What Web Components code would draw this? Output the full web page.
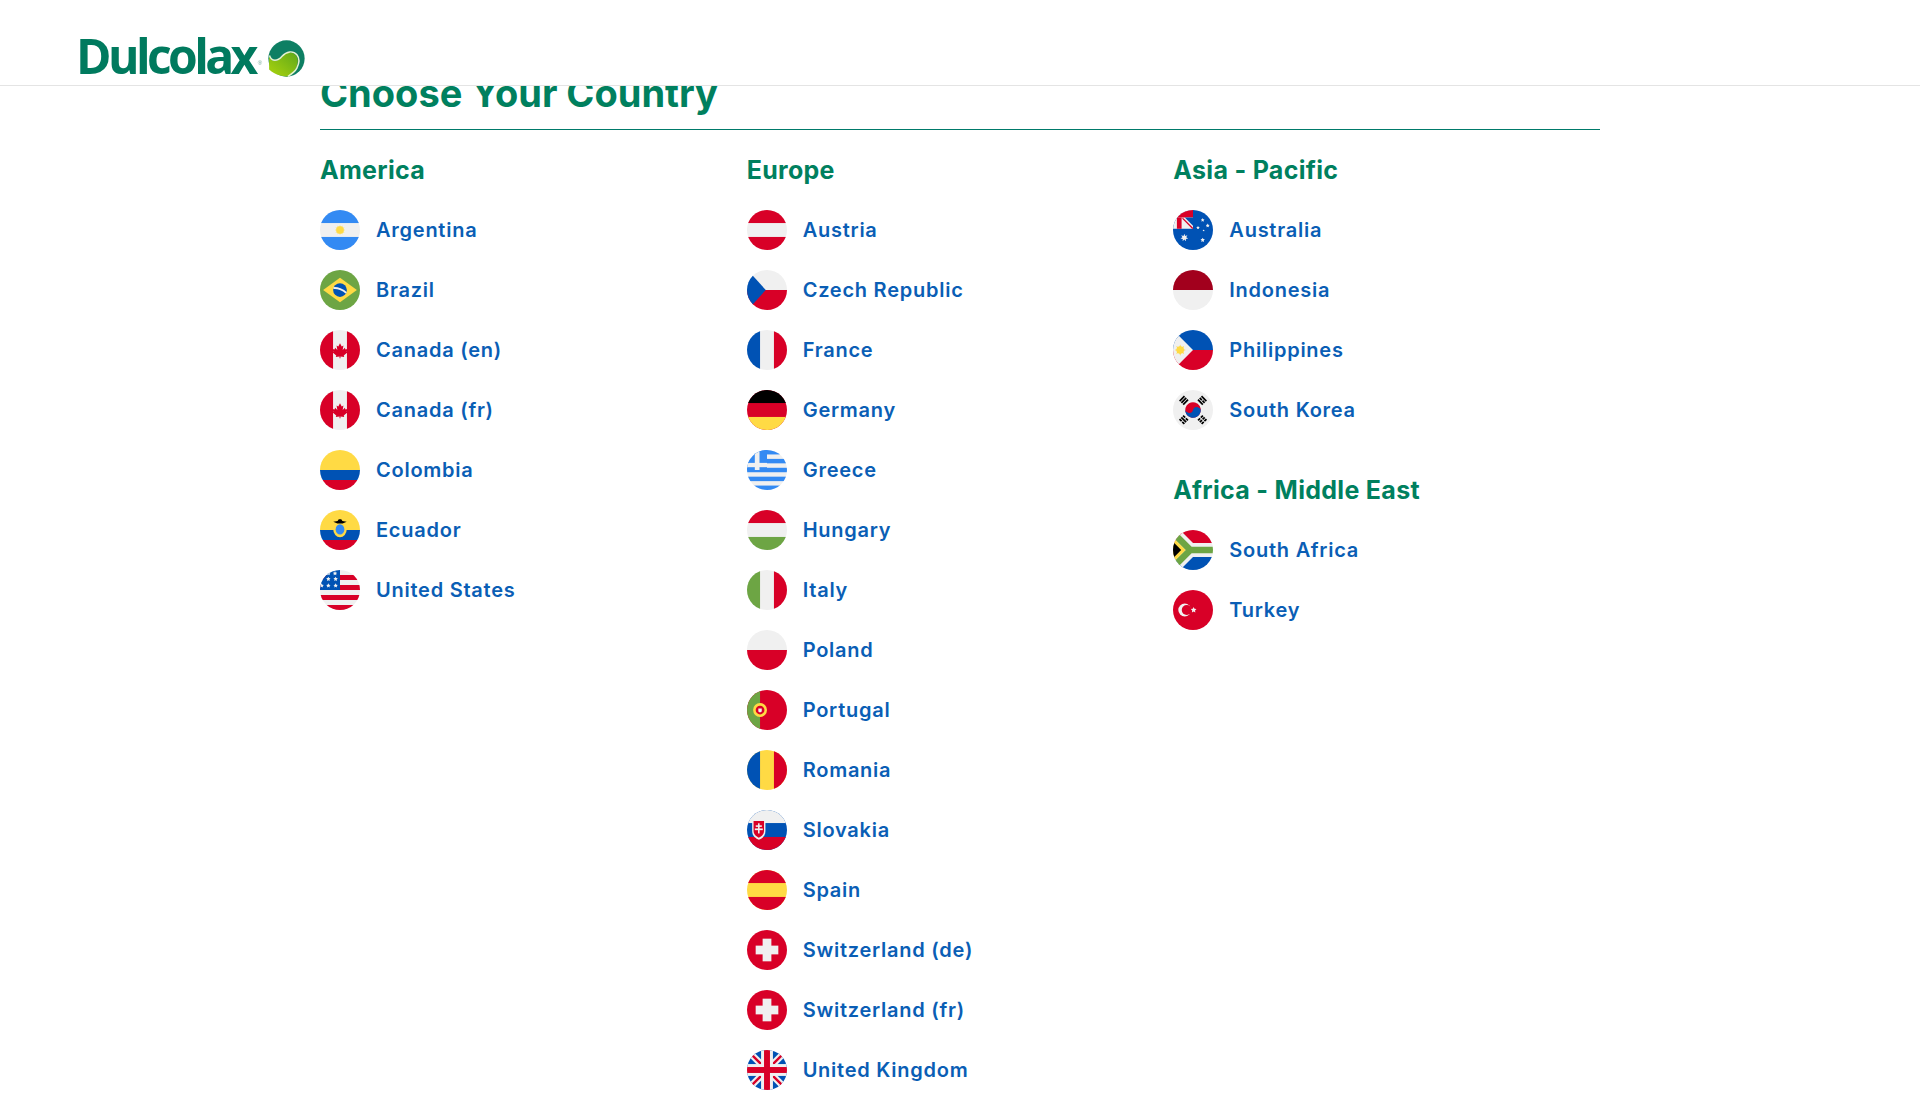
<!DOCTYPE html>
<html lang="en">
<head>
<meta charset="utf-8">
<title>Choose Your Country</title>
<style>
  html, body { margin: 0; padding: 0; background: #fff; }
  body { font-family: Inter, "Liberation Sans", sans-serif; }
</style>
</head>
<body>
<site-header></site-header>
<country-page heading="Choose Your Country">
  <region-column>
    <region-list heading="America">
      <country-item flag="ar">Argentina</country-item>
      <country-item flag="br">Brazil</country-item>
      <country-item flag="ca">Canada (en)</country-item>
      <country-item flag="ca">Canada (fr)</country-item>
      <country-item flag="co">Colombia</country-item>
      <country-item flag="ec">Ecuador</country-item>
      <country-item flag="us">United States</country-item>
    </region-list>
  </region-column>
  <region-column>
    <region-list heading="Europe">
      <country-item flag="at">Austria</country-item>
      <country-item flag="cz">Czech Republic</country-item>
      <country-item flag="fr">France</country-item>
      <country-item flag="de">Germany</country-item>
      <country-item flag="gr">Greece</country-item>
      <country-item flag="hu">Hungary</country-item>
      <country-item flag="it">Italy</country-item>
      <country-item flag="pl">Poland</country-item>
      <country-item flag="pt">Portugal</country-item>
      <country-item flag="ro">Romania</country-item>
      <country-item flag="sk">Slovakia</country-item>
      <country-item flag="es">Spain</country-item>
      <country-item flag="ch">Switzerland (de)</country-item>
      <country-item flag="ch">Switzerland (fr)</country-item>
      <country-item flag="gb">United Kingdom</country-item>
    </region-list>
  </region-column>
  <region-column>
    <region-list heading="Asia - Pacific">
      <country-item flag="au">Australia</country-item>
      <country-item flag="id">Indonesia</country-item>
      <country-item flag="ph">Philippines</country-item>
      <country-item flag="kr">South Korea</country-item>
    </region-list>
    <region-list heading="Africa - Middle East">
      <country-item flag="za">South Africa</country-item>
      <country-item flag="tr">Turkey</country-item>
    </region-list>
  </region-column>
</country-page>

<script>
const RED = '#d80027', WHITE = '#f0f0f0', BLUE = '#0052b4', YELLOW = '#ffda44',
      GREEN = '#6da544', SKY = '#338af3', BLACK = '#000';

const rect = (x, y, w, h, fill) => `<rect x="${x}" y="${y}" width="${w}" height="${h}" fill="${fill}"/>`;
const circle = (x, y, r, fill) => `<circle cx="${x}" cy="${y}" r="${r}" fill="${fill}"/>`;
const hBands = (a, b, c) => rect(0, 0, 512, 512, b) + rect(0, 0, 512, 167, a) + rect(0, 345, 512, 167, c);
const vBands = (a, b, c) => rect(0, 0, 512, 512, b) + rect(0, 0, 167, 512, a) + rect(345, 0, 167, 512, c);

function star(cx, cy, r, fill, points = 5) {
  let pts = [];
  for (let i = 0; i < points * 2; i++) {
    const rad = i % 2 ? r * 0.5 : r;
    const a = Math.PI * i / points - Math.PI / 2;
    pts.push((cx + rad * Math.cos(a)).toFixed(1) + ',' + (cy + rad * Math.sin(a)).toFixed(1));
  }
  return `<polygon points="${pts.join(' ')}" fill="${fill}"/>`;
}

const leaf = `<path fill="${RED}" d="M256 170L278 210L300 198L290 255L318 228L326 248L350 244L342 278L354 286L304 326L310 344L262 338V362H250V338L202 344L208 326L158 286L170 278L162 244L186 248L194 228L222 255L212 198L234 210Z"/>`;

function trigram(cx, cy, angle, bars) {
  // bars: one entry per row, true = solid, false = broken
  let s = `<g transform="rotate(${angle} ${cx} ${cy})">`;
  bars.forEach((solid, i) => {
    const y = cy - 42 + i * 32;
    if (solid) s += rect(cx - 44, y, 88, 22, BLACK);
    else s += rect(cx - 44, y, 38, 22, BLACK) + rect(cx + 6, y, 38, 22, BLACK);
  });
  return s + '</g>';
}

const FLAGS = {
  ar: hBands(SKY, WHITE, SKY) + star(256, 256, 68, YELLOW, 12) + circle(256, 256, 48, YELLOW),
  br: rect(0, 0, 512, 512, GREEN) + `<polygon points="256,100 472,256 256,412 40,256" fill="${YELLOW}"/>` +
      circle(256, 256, 88, BLUE) +
      `<path fill="none" stroke="${WHITE}" stroke-width="24" d="M172 232C224 226 296 250 336 294"/>`,
  ca: vBands(RED, WHITE, RED) + leaf,
  co: rect(0, 0, 512, 256, YELLOW) + rect(0, 256, 512, 128, BLUE) + rect(0, 384, 512, 128, RED),
  ec: rect(0, 0, 512, 256, YELLOW) + rect(0, 256, 512, 128, BLUE) + rect(0, 384, 512, 128, RED) +
      `<ellipse cx="256" cy="250" rx="86" ry="98" fill="${YELLOW}"/><ellipse cx="256" cy="248" rx="56" ry="66" fill="${SKY}"/>` +
      `<path fill="${BLACK}" d="M170 150L225 140L240 118H272L287 140L342 150L290 172H222Z"/>`,
  us: rect(0, 0, 512, 512, WHITE) + rect(0, 64, 512, 64, RED) + rect(0, 192, 512, 64, RED) + rect(0, 320, 512, 64, RED) + rect(0, 448, 512, 64, RED) +
      rect(0, 0, 256, 256, BLUE) +
      [[192, 43], [107, 43], [107, 115], [200, 115], [21, 200], [107, 200], [200, 200]]
        .map(p => star(p[0], p[1], 30, WHITE)).join(''),
  at: hBands(RED, WHITE, RED),
  cz: rect(0, 0, 512, 256, WHITE) + rect(0, 256, 512, 256, RED) + `<polygon points="0,0 75,75 240,256 75,437 0,512" fill="${BLUE}"/>`,
  fr: vBands(BLUE, WHITE, RED),
  de: hBands(BLACK, RED, YELLOW),
  gr: rect(0, 0, 512, 512, WHITE) + [0, 2, 4, 6, 8].map(i => rect(0, i * 56.9, 512, 56.9, SKY)).join('') +
      rect(0, 0, 256, 256, SKY) + rect(100, 0, 60, 256, WHITE) + rect(0, 165, 256, 55, WHITE),
  hu: hBands(RED, WHITE, GREEN),
  it: vBands(GREEN, WHITE, RED),
  pl: rect(0, 0, 512, 256, WHITE) + rect(0, 256, 512, 256, RED),
  pt: rect(0, 0, 512, 512, RED) + rect(0, 0, 167, 512, GREEN) + circle(167, 256, 89, YELLOW) + circle(167, 256, 56, RED) +
      `<path fill="${WHITE}" d="M145 236h44v28c0 14-10 22-22 22s-22-8-22-22z"/>`,
  ro: vBands(BLUE, YELLOW, RED),
  sk: hBands(WHITE, BLUE, RED) +
      `<path fill="${WHITE}" d="M66 140h170v130c0 66-50 98-85 112-35-14-85-46-85-112z"/><path fill="${RED}" d="M84 140h134v126c0 48-36 74-67 88-31-14-67-40-67-88z"/>` +
      rect(141, 170, 20, 130, WHITE) + rect(112, 196, 78, 20, WHITE) + rect(100, 236, 102, 22, WHITE),
  es: hBands(RED, YELLOW, RED),
  ch: rect(0, 0, 512, 512, RED) + rect(200, 111, 112, 290, WHITE) + rect(111, 200, 290, 112, WHITE),
  gb: rect(0, 0, 512, 512, BLUE) +
      `<path fill="none" stroke="${WHITE}" stroke-width="84" d="M0 0L512 512M512 0L0 512"/>` +
      `<path fill="none" stroke="${RED}" stroke-width="30" d="M0 0L512 512M512 0L0 512"/>` +
      rect(180, 0, 152, 512, WHITE) + rect(0, 180, 512, 152, WHITE) +
      rect(218, 0, 76, 512, RED) + rect(0, 218, 512, 76, RED),
  au: rect(0, 0, 512, 512, BLUE) + rect(0, 0, 256, 240, WHITE) + rect(0, 0, 256, 96, RED) + rect(50, 96, 60, 144, RED) +
      `<polygon points="150,96 256,96 256,202" fill="${BLUE}"/>` +
      `<polygon points="112,104 134,104 256,226 256,240 244,240" fill="${RED}"/>` +
      star(145, 354, 50, WHITE, 7) + star(380, 128, 26, WHITE) + star(320, 226, 24, WHITE) +
      star(444, 200, 26, WHITE) + star(380, 384, 30, WHITE) + star(392, 262, 14, WHITE),
  id: rect(0, 0, 512, 256, '#a2001d') + rect(0, 256, 512, 256, WHITE),
  ph: rect(0, 0, 512, 256, BLUE) + rect(0, 256, 512, 256, RED) + `<polygon points="0,0 75,75 256,256 75,437 0,512" fill="${WHITE}"/>` +
      star(92, 256, 72, YELLOW, 8) + circle(92, 256, 48, YELLOW),
  kr: rect(0, 0, 512, 512, WHITE) +
      `<g transform="rotate(15 256 256)">` + circle(256, 256, 100, RED) +
      `<path fill="${BLUE}" d="M156 256A50 50 0 0 0 256 256A50 50 0 0 1 356 256A100 100 0 0 1 156 256Z"/></g>` +
      trigram(138, 132, -45, [true, true, true]) + trigram(374, 132, 45, [true, false, true]) +
      trigram(138, 380, 45, [false, true, false]) + trigram(374, 380, -45, [false, false, false]),
  za: rect(0, 0, 512, 512, WHITE) + rect(0, 0, 512, 167, RED) + rect(0, 345, 512, 167, BLUE) +
      `<path fill="none" stroke="${WHITE}" stroke-width="178" d="M-46 -10L220 256L-46 522M220 256H520"/>` +
      `<path fill="none" stroke="${GREEN}" stroke-width="85" d="M-46 -10L220 256L-46 522M220 256H520"/>` +
      `<polygon points="0,95 161,256 0,417" fill="${YELLOW}"/><polygon points="0,151 105,256 0,361" fill="${BLACK}"/>`,
  tr: rect(0, 0, 512, 512, RED) + circle(150, 256, 82, WHITE) + circle(176, 256, 64, RED) + star(264, 256, 38, WHITE)
};

class CountryFlag extends HTMLElement {
  connectedCallback() {
    const root = this.shadowRoot || this.attachShadow({ mode: 'open' });
    root.innerHTML = `
      <style>
        :host { display: block; width: 40px; height: 40px; flex: none; }
        svg { display: block; width: 100%; height: 100%; border-radius: 50%; }
      </style>
      <svg viewBox="0 0 512 512" aria-hidden="true">${FLAGS[this.getAttribute('code')] || ''}</svg>`;
  }
}

const itemTemplate = document.createElement('template');
itemTemplate.innerHTML = `
  <style>
    :host { display: block; height: 60px; }
    a {
      display: flex;
      align-items: center;
      gap: 16px;
      height: 60px;
      color: #0a5eb5;
      font-family: Inter, "Liberation Sans", sans-serif;
      font-size: 20px;
      font-weight: 600;
      letter-spacing: 0.75px;
      text-decoration: none;
    }
  </style>
  <a href="#"><country-flag></country-flag><span><slot></slot></span></a>`;

class CountryItem extends HTMLElement {
  constructor() {
    super();
    this.attachShadow({ mode: 'open' }).appendChild(itemTemplate.content.cloneNode(true));
  }
  connectedCallback() {
    const flag = this.shadowRoot.querySelector('country-flag');
    flag.setAttribute('code', this.getAttribute('flag'));
    if (flag.connectedCallback) flag.connectedCallback();
  }
}

const listTemplate = document.createElement('template');
listTemplate.innerHTML = `
  <style>
    :host { display: block; margin-bottom: 28px; }
    h3 {
      margin: 0 0 8px;
      height: 44px;
      line-height: 44px;
      color: #00805e;
      font-family: Inter, "Liberation Sans", sans-serif;
      font-size: 25px;
      font-weight: 700;
      letter-spacing: 0.3px;
    }
  </style>
  <h3></h3>
  <slot></slot>`;

class RegionList extends HTMLElement {
  constructor() {
    super();
    this.attachShadow({ mode: 'open' }).appendChild(listTemplate.content.cloneNode(true));
  }
  connectedCallback() {
    this.shadowRoot.querySelector('h3').textContent = this.getAttribute('heading');
  }
}

class RegionColumn extends HTMLElement {
  constructor() {
    super();
    this.attachShadow({ mode: 'open' }).innerHTML = `
      <style>:host { display: block; min-width: 0; }</style>
      <slot></slot>`;
  }
}

const pageTemplate = document.createElement('template');
pageTemplate.innerHTML = `
  <style>
    :host { display: block; padding: 66px 320px 0; }
    h2 {
      margin: 0;
      height: 63px;
      line-height: 54px;
      border-bottom: 1px solid #007a6a;
      color: #00805e;
      font-family: Inter, "Liberation Sans", sans-serif;
      font-size: 38px;
      font-weight: 700;
      letter-spacing: 0;
    }
    .columns {
      display: grid;
      grid-template-columns: repeat(3, 1fr);
      padding-top: 18px;
    }
  </style>
  <h2></h2>
  <div class="columns"><slot></slot></div>`;

class CountryPage extends HTMLElement {
  constructor() {
    super();
    this.attachShadow({ mode: 'open' }).appendChild(pageTemplate.content.cloneNode(true));
  }
  connectedCallback() {
    this.shadowRoot.querySelector('h2').textContent = this.getAttribute('heading');
  }
}

const headerTemplate = document.createElement('template');
headerTemplate.innerHTML = `
  <style>
    :host {
      display: flex;
      align-items: flex-start;
      position: fixed;
      top: 0; left: 0; right: 0;
      height: 86px;
      box-sizing: border-box;
      padding: 27px 0 0 76px;
      background: #fff;
      border-bottom: 1px solid #e4e4e4;
      z-index: 10;
    }
    .logo { display: flex; align-items: flex-start; text-decoration: none; color: #007a5e; }
    .word {
      font-family: "Open Sans", "Liberation Sans", sans-serif;
      font-size: 48px;
      font-weight: 700;
      line-height: 58px;
      letter-spacing: -3.6px;
    }
    .reg { font: 400 6px "Liberation Sans", sans-serif; margin: 33px 0 0 3px; width: 10px; color: #7a9; }
    svg { width: 37px; height: 37px; margin-top: 13px; flex: none; }
  </style>
  <a class="logo" href="#">
    <span class="word">Dulcolax</span><span class="reg">®</span>
    <svg viewBox="0 0 100 100">
      <defs>
        <linearGradient id="lg" x1="0" y1="1" x2="1" y2="0"><stop offset="0.2" stop-color="#9ccb10"/><stop offset="1" stop-color="#5fa81a"/></linearGradient>
      </defs>
      <circle cx="50" cy="50" r="49" fill="#0e7f63"/>
      <path fill="url(#lg)" d="M3 44C10 62 26 60 38 46 50 32 66 30 76 42 82 50 82 62 76 76 72 84 62 94 54 98 50 99 24 99 3 80 1 50z"/>
      <path fill="none" stroke="#e8f2d0" stroke-width="4" d="M4 42C10 60 26 58 38 44 50 30 68 28 78 40 86 50 84 64 78 76 74 84 64 92 54 98"/>
    </svg>
  </a>`;

class SiteHeader extends HTMLElement {
  constructor() {
    super();
    this.attachShadow({ mode: 'open' }).appendChild(headerTemplate.content.cloneNode(true));
  }
}

customElements.define('country-flag', CountryFlag);
customElements.define('country-item', CountryItem);
customElements.define('region-list', RegionList);
customElements.define('region-column', RegionColumn);
customElements.define('country-page', CountryPage);
customElements.define('site-header', SiteHeader);
</script>
</body>
</html>
